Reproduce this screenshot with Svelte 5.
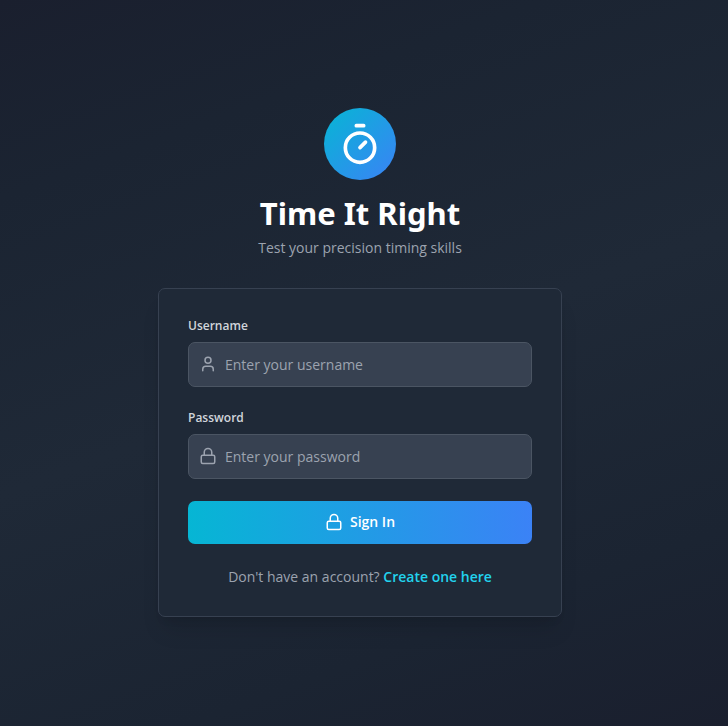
<script>
  let username = $state('');
  let password = $state('');

  function signIn(event) {
    event.preventDefault();
  }
</script>

{#snippet lock()}
  <svg class="icon" viewBox="0 0 24 24" aria-hidden="true">
    <rect x="3" y="11" width="18" height="11" rx="2" ry="2" />
    <path d="M7 11V7a5 5 0 0 1 10 0v4" />
  </svg>
{/snippet}

<main class="page">
  <div class="content">
    <header class="intro">
      <div class="logo">
        <svg viewBox="0 0 24 24" aria-hidden="true">
          <line x1="10" x2="14" y1="2" y2="2" />
          <line x1="12" x2="15" y1="14" y2="11" />
          <circle cx="12" cy="14" r="8" />
        </svg>
      </div>
      <h1>Time It Right</h1>
      <p>Test your precision timing skills</p>
    </header>

    <section class="card">
      <form onsubmit={signIn}>
        <div class="field">
          <label for="username">Username</label>
          <div class="control">
            <svg class="icon" viewBox="0 0 24 24" aria-hidden="true">
              <path d="M19 21v-2a4 4 0 0 0-4-4H9a4 4 0 0 0-4 4v2" />
              <circle cx="12" cy="7" r="4" />
            </svg>
            <input id="username" type="text" placeholder="Enter your username" bind:value={username} />
          </div>
        </div>
        <div class="field">
          <label for="password">Password</label>
          <div class="control">
            {@render lock()}
            <input id="password" type="password" placeholder="Enter your password" bind:value={password} />
          </div>
        </div>
        <button type="submit">
          {@render lock()}
          Sign In
        </button>
      </form>
      <p class="signup">Don't have an account? <a href="#register">Create one here</a></p>
    </section>
  </div>
</main>

<style>
  .page {
    box-sizing: border-box;
    min-height: 100vh;
    display: flex;
    align-items: center;
    justify-content: center;
    padding: 14px 22px 16px 14px;
    background: linear-gradient(160deg, #1a1f2e 0%, #1b2432 20%, #1f2937 50%, #1b2432 80%, #1a1f2e 100%);
    font-family: 'Segoe UI', 'Open Sans', 'Noto Sans', sans-serif;
    font-size: 14px;
    line-height: 22px;
    color: #9ca3af;
  }
  .content {
    width: 100%;
    max-width: 404px;
  }
  .intro {
    display: flex;
    flex-direction: column;
    align-items: center;
    margin-bottom: 29px;
    text-align: center;
  }
  .logo {
    display: flex;
    padding: 14px;
    margin-bottom: 14px;
    border-radius: 50%;
    background: linear-gradient(135deg, #06b6d4, #3b82f6);
    color: #fff;
  }
  .logo svg {
    width: 44px;
    height: 44px;
  }
  svg {
    fill: none;
    stroke: currentColor;
    stroke-width: 2;
    stroke-linecap: round;
    stroke-linejoin: round;
  }
  h1 {
    margin: 0 0 4px;
    font-family: 'Segoe UI', 'Noto Sans', sans-serif;
    font-size: 31px;
    line-height: 39px;
    font-weight: 700;
    color: #fff;
  }
  p {
    margin: 0;
  }
  .card {
    box-sizing: border-box;
    padding: 28px 29px;
    border: 1px solid #374151;
    border-radius: 7px;
    background: #1f2937;
    box-shadow: 0 18px 22px -5px rgba(0, 0, 0, 0.1), 0 7px 9px -5px rgba(0, 0, 0, 0.1);
  }
  form {
    display: flex;
    flex-direction: column;
    gap: 22px;
  }
  .field {
    display: flex;
    flex-direction: column;
    gap: 7px;
  }
  label {
    font-size: 12px;
    line-height: 18px;
    font-weight: 600;
    color: #d1d5db;
  }
  .icon {
    flex: none;
    width: 18px;
    height: 18px;
  }
  .control {
    display: flex;
    align-items: center;
    gap: 8px;
    padding: 0 10px;
    border: 1px solid #4b5563;
    border-radius: 7px;
    background: #374151;
  }
  .control:focus-within {
    border-color: #06b6d4;
  }
  input {
    flex: 1;
    min-width: 0;
    height: 43px;
    padding: 0;
    border: 0;
    outline: 0;
    background: none;
    font: inherit;
    color: #fff;
  }
  input::placeholder {
    color: #9ca3af;
    opacity: 1;
  }
  button {
    display: flex;
    align-items: center;
    justify-content: center;
    gap: 7px;
    height: 43px;
    border: 0;
    border-radius: 7px;
    background: linear-gradient(90deg, #06b6d4, #3b82f6);
    font: inherit;
    font-weight: 600;
    color: #fff;
    cursor: pointer;
  }
  .signup {
    margin-top: 22px;
    text-align: center;
  }
  a {
    font-weight: 600;
    color: #22d3ee;
    text-decoration: none;
  }
</style>
